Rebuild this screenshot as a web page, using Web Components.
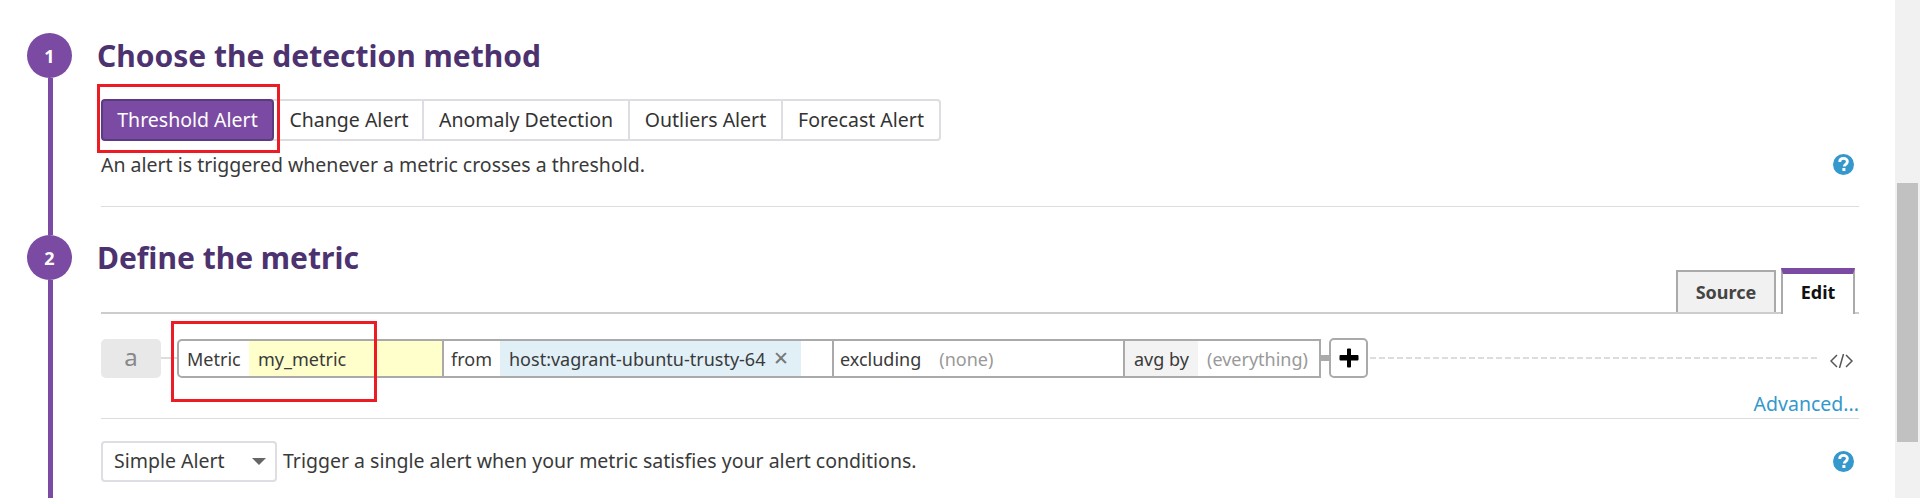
<!DOCTYPE html>
<html>
<head>
<meta charset="utf-8">
<style>
  html, body { margin: 0; height: 498px; overflow: hidden; background: #fff; }
  body { font-family: "Noto Sans", "Open Sans", sans-serif; font-size: 19.5px; color: #3a3a3a; display: flex; }
</style>
</head>
<body>
<monitor-page>
  <step-section num="1" title="Choose the detection method">
    <method-tabs></method-tabs>
    <help-line>An alert is triggered whenever a metric crosses a threshold.</help-line>
    <div style="height:1px;background:#ddd;margin:25px 0 28px"></div>
  </step-section>
  <step-section num="2" title="Define the metric" last>
    <metric-editor></metric-editor>
    <alert-type></alert-type>
  </step-section>
</monitor-page>
<page-scrollbar></page-scrollbar>

<script>
class monitorPage extends HTMLElement {
    constructor() {
        super();
        this.attachShadow({ mode: "open" });
        this.shadowRoot.innerHTML = `
        <style>
            :host { display: flex; flex-direction: column; width: 1895px; height: 498px; padding: 33px 36px 0 27px; box-sizing: border-box; overflow: hidden; }
        </style>
        <slot></slot>`;
    }
}

class stepSection extends HTMLElement {
    constructor() {
        super();
        this.attachShadow({ mode: "open" });
    }

    connectedCallback() {
        const num = this.getAttribute("num") || "";
        const title = this.getAttribute("title") || "";
        this.shadowRoot.innerHTML = `
        <style>
            :host { display: grid; grid-template-columns: 45px 1fr; column-gap: 25px; }
            :host([last]) { flex: 1; }
            .rail { display: flex; flex-direction: column; align-items: center; }
            .num { width: 45px; height: 45px; border-radius: 50%; background: #7b4ba3; color: #fff; font-weight: 700; font-size: 18px; display: flex; align-items: center; justify-content: center; flex: none; }
            .line { width: 5px; flex: 1; background: #7b4ba3; margin-left: 1px; }
            h2 { margin: 0; font-size: 30px; line-height: 45px; font-weight: 700; color: #4d3270; }
            .body { padding-left: 4px; }
        </style>
        <div class="rail"><div class="num">${num}</div><div class="line"></div></div>
        <div>
            <h2>${title}</h2>
            <div class="body"><slot></slot></div>
        </div>`;
    }
}

class methodTabs extends HTMLElement {
    constructor() {
        super();
        this.attachShadow({ mode: "open" });
        const names = ["Change Alert", "Anomaly Detection", "Outliers Alert", "Forecast Alert"];
        this.shadowRoot.innerHTML = `
        <style>
            :host { display: flex; position: relative; margin-top: 21px; height: 42px; width: 840px; font-size: 19.5px; color: #333; }
            .on { width: 173px; box-sizing: border-box; background: #7b4ba3; border: 2px solid #5c3a80; border-radius: 4px; color: #fff; display: flex; align-items: center; justify-content: center; padding-bottom: 2px; position: relative; z-index: 1; }
            .rest { flex: 1; display: flex; box-sizing: border-box; border: 2px solid #dddde3; border-left: 0; border-radius: 0 4px 4px 0; margin-left: -2px; }
            .rest div { display: flex; align-items: center; justify-content: center; border-left: 2px solid #dddde3; box-sizing: border-box; padding-bottom: 2px; }
            .rest div:first-child { border-left: 0; }
            .mark { position: absolute; left: -4px; top: -15px; width: 183px; height: 69px; box-sizing: border-box; border: 3px solid #ed1c24; z-index: 2; }
        </style>
        <div class="on">Threshold Alert</div>
        <div class="rest">
            <div style="width:150px;padding-left:4px">${names[0]}</div>
            <div style="width:206px">${names[1]}</div>
            <div style="width:153px">${names[2]}</div>
            <div style="flex:1">${names[3]}</div>
        </div>
        <div class="mark"></div>`;
    }
}

class helpIcon extends HTMLElement {
    constructor() {
        super();
        this.attachShadow({ mode: "open" });
        this.shadowRoot.innerHTML = `
        <style>
            :host { display: block; width: 21px; height: 21px; flex: none; }
            svg { display: block; }
        </style>
        <svg width="21" height="21" viewBox="0 0 21 21">
            <circle cx="10.5" cy="10.5" r="10.5" fill="#3498cc"/>
            <path d="M6.7 8c0-2.2 1.7-3.6 3.9-3.6s3.8 1.3 3.8 3.2c0 2.8-3.1 2.6-3.1 4.9" fill="none" stroke="#fff" stroke-width="2.8"/>
            <rect x="9.4" y="14" width="3" height="3" fill="#fff"/>
        </svg>`;
    }
}

class helpLine extends HTMLElement {
    constructor() {
        super();
        this.attachShadow({ mode: "open" });
        this.shadowRoot.innerHTML = `
        <style>
            :host { display: flex; align-items: center; justify-content: space-between; height: 34px; padding-right: 5px; margin-top: 6px; color: #3a3a3a; }
        </style>
        <div><slot></slot></div>
        <help-icon></help-icon>`;
    }
}

class queryBox extends HTMLElement {
    constructor() {
        super();
        this.attachShadow({ mode: "open" });
        this.shadowRoot.innerHTML = `
        <style>
            :host { display: flex; width: 1144px; height: 39px; box-sizing: border-box; border: 2px solid #aaa; border-radius: 5px 0 0 5px; font-size: 18px; color: #3a3a3a; position: relative; }
            .cell { display: flex; align-items: center; box-sizing: border-box; white-space: nowrap; padding-top: 2px; }
            .sep { border-right: 2px solid #aaa; }
            .mute { color: #999; }
            .x { color: #777; font-size: 19px; margin-left: 8px; margin-top: -3px; }
            .mark { position: absolute; left: -8px; top: -20px; width: 206px; height: 81px; box-sizing: border-box; border: 3px solid #ed1c24; }
        </style>
        <div class="cell" style="width:70px;padding-left:8px">Metric</div>
        <div class="cell sep" style="width:195px;background:#ffffcc;padding-left:9px">my_metric</div>
        <div class="cell" style="width:56px;padding-left:7px">from</div>
        <div class="cell" style="width:301px;background:#e1eff7;padding-left:9px">host:vagrant-ubuntu-trusty-64<span class="x">&#x2715;</span></div>
        <div class="cell sep" style="width:33px"></div>
        <div class="cell sep" style="width:291px;padding-left:6px">excluding<span class="mute" style="margin-left:18px">(none)</span></div>
        <div class="cell" style="width:73px;background:#f3f3f3;padding-left:9px">avg by</div>
        <div class="cell mute" style="flex:1;padding-left:9px">(everything)</div>
        <div class="mark"></div>`;
    }
}

class metricEditor extends HTMLElement {
    constructor() {
        super();
        this.attachShadow({ mode: "open" });
        this.shadowRoot.innerHTML = `
        <style>
            :host { display: block; margin-top: -13px; }
            .tabs { display: flex; justify-content: flex-end; align-items: flex-end; gap: 5px; height: 45px; border-bottom: 2px solid #ccc; padding-right: 4px; font-size: 18px; font-weight: 700; }
            .tab { box-sizing: border-box; display: flex; align-items: center; justify-content: center; border: 2px solid #aaa; border-bottom: 0; }
            .src { width: 100px; height: 42px; background: #f1f1f1; color: #444; }
            .edit { width: 74px; height: 46px; margin-bottom: -2px; background: #fff; color: #111; border-top: 6px solid #7b4ba3; padding-bottom: 4px; }
            .row { display: flex; align-items: center; height: 40px; margin-top: 24px; }
            .letter { width: 60px; height: 39px; background: #e8e8e8; border-radius: 5px; color: #888; font-size: 24px; display: flex; align-items: center; justify-content: center; padding-bottom: 4px; box-sizing: border-box; }
            .stub { width: 16px; height: 2px; background: #ddd; }
            .stub2 { width: 8px; height: 6px; background: #aaa; }
            .plus { width: 39px; height: 40px; box-sizing: border-box; border: 2px solid #aaa; border-radius: 5px; display: flex; align-items: center; justify-content: center; }
            .dash { flex: 1; height: 2px; margin: 0 11px 0 2px; background: repeating-linear-gradient(90deg, #ddd 0 6px, transparent 6px 9px); }
            .code { margin: 6px 6px 0 0; display: block; }
            .adv { text-align: right; color: #3498cc; font-size: 19.5px; line-height: 26px; margin-top: 13px; }
            .rule { height: 1px; background: #ddd; margin-top: 1px; }
        </style>
        <div class="tabs">
            <div class="tab src">Source</div>
            <div class="tab edit">Edit</div>
        </div>
        <div class="row">
            <div class="letter">a</div>
            <div class="stub"></div>
            <query-box></query-box>
            <div class="stub2"></div>
            <div class="plus">
                <svg width="20" height="20" viewBox="0 0 20 20"><path d="M8 1.5a1 1 0 0 1 1-1h2a1 1 0 0 1 1 1V7h6.5a1 1 0 0 1 1 1v3.500a1 1 0 0 1-1 1H12v6a1 1 0 0 1-1 1H9a1 1 0 0 1-1-1v-6H1.500a1 1 0 0 1-1-1V8a1 1 0 0 1 1-1H8z" fill="#000"/></svg>
            </div>
            <div class="dash"></div>
            <svg class="code" width="23" height="14" viewBox="0 0 23 14" fill="none" stroke="#555" stroke-width="1.5"><path d="M7 1L1 7l6 6M16 1l6 6-6 6M13.500 0L9.500 14"/></svg>
        </div>
        <div class="adv">Advanced...</div>
        <div class="rule"></div>`;
    }
}

class alertType extends HTMLElement {
    constructor() {
        super();
        this.attachShadow({ mode: "open" });
        this.shadowRoot.innerHTML = `
        <style>
            :host { display: flex; align-items: center; height: 41px; margin-top: 22px; padding-right: 5px; color: #3a3a3a; }
            .select { width: 176px; height: 41px; box-sizing: border-box; border: 2px solid #dddde3; border-radius: 4px; display: flex; align-items: center; justify-content: space-between; padding: 0 9px 2px 11px; margin-right: 6px; }
            .arrow { width: 0; height: 0; border-left: 7px solid transparent; border-right: 7px solid transparent; border-top: 7px solid #666; margin-top: 2px; }
            .grow { flex: 1; padding-bottom: 2px; }
        </style>
        <div class="select">Simple Alert<span class="arrow"></span></div>
        <div class="grow">Trigger a single alert when your metric satisfies your alert conditions.</div>
        <help-icon></help-icon>`;
    }
}

class pageScrollbar extends HTMLElement {
    constructor() {
        super();
        this.attachShadow({ mode: "open" });
        this.shadowRoot.innerHTML = `
        <style>
            :host { display: block; width: 25px; height: 498px; background: #f1f1f1; box-sizing: border-box; padding: 183px 2px 0; }
            div { height: 259px; background: #c1c1c1; }
        </style>
        <div></div>`;
    }
}

customElements.define("monitor-page", monitorPage);
customElements.define("step-section", stepSection);
customElements.define("method-tabs", methodTabs);
customElements.define("help-icon", helpIcon);
customElements.define("help-line", helpLine);
customElements.define("query-box", queryBox);
customElements.define("metric-editor", metricEditor);
customElements.define("alert-type", alertType);
customElements.define("page-scrollbar", pageScrollbar);
</script>
</body>
</html>
